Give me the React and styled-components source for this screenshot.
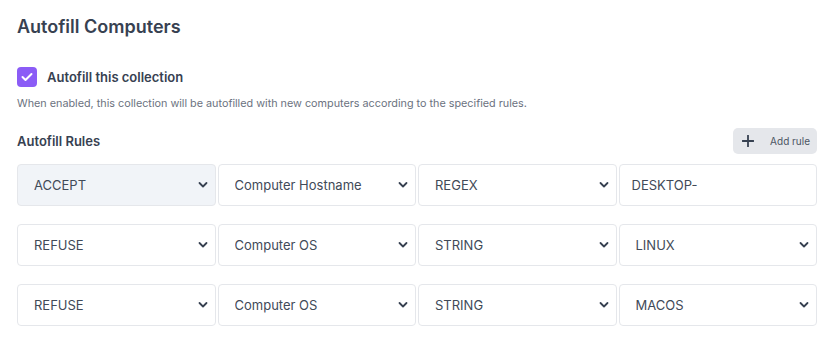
import React, { useState } from 'react'
import styled, { createGlobalStyle } from 'styled-components'

const GlobalStyle = createGlobalStyle`
  body {
    margin: 0;
    background: #ffffff;
    font-family: Inter, "Noto Sans", sans-serif;
    color: #374151;
  }
`

const Page = styled.div`
  width: 800px;
  padding: 15px 23px 0 17px;
  display: flex;
  flex-direction: column;
`

const Title = styled.h2`
  margin: 0;
  font-size: 18px;
  font-weight: 600;
  line-height: 24px;
  color: #374151;
`

const CheckRow = styled.label`
  display: flex;
  align-items: center;
  gap: 10px;
  margin-top: 28px;
  cursor: pointer;
`

const Box = styled.span`
  width: 20px;
  height: 20px;
  border-radius: 4px;
  background: ${p => (p.checked ? '#8b5cf6' : '#ffffff')};
  border: ${p => (p.checked ? 'none' : '1px solid #d1d5db')};
  display: flex;
  align-items: center;
  justify-content: center;
`

const CheckLabel = styled.span`
  font-size: 13px;
  font-weight: 600;
  color: #374151;
`

const Hint = styled.p`
  margin: 9px 0 0;
  font-size: 10.8px;
  line-height: 16px;
  color: #6b7280;
`

const RulesHeader = styled.div`
  display: flex;
  align-items: center;
  justify-content: space-between;
  margin-top: 16px;
`

const SubTitle = styled.span`
  font-size: 13px;
  font-weight: 600;
  color: #374151;
`

const AddButton = styled.button`
  display: flex;
  align-items: center;
  gap: 16px;
  height: 26px;
  padding: 0 7px 0 9px;
  border: none;
  border-radius: 5px;
  background: #e5e7eb;
  color: #4b5563;
  font-family: Inter, sans-serif;
  font-size: 10px;
  cursor: pointer;
`

const Rules = styled.div`
  display: flex;
  flex-direction: column;
  gap: 18px;
  margin-top: 10px;
`

const Row = styled.div`
  display: grid;
  grid-template-columns: repeat(4, 1fr);
  gap: 2px;
`

const SelectWrap = styled.div`
  position: relative;
  height: 42px;
`

const Select = styled.select`
  appearance: none;
  width: 100%;
  height: 100%;
  box-sizing: border-box;
  padding: 0 28px 0 ${p => (p.$pad || 16)}px;
  border: 1px solid #e5e7eb;
  border-radius: 4px;
  background: ${p => (p.$tint ? '#f1f4f8' : '#ffffff')};
  font-family: Inter, sans-serif;
  font-size: 13px;
  color: #414a58;
  outline: none;
`

const Chevron = styled.svg`
  position: absolute;
  right: 8px;
  top: 50%;
  margin-top: -4px;
  pointer-events: none;
`

const TextInput = styled.input`
  width: 100%;
  height: 42px;
  box-sizing: border-box;
  padding: 0 12px;
  border: 1px solid #e5e7eb;
  border-radius: 4px;
  font-family: Inter, sans-serif;
  font-size: 13px;
  color: #414a58;
  outline: none;
`

const rules = [
  { action: 'ACCEPT', field: 'Computer Hostname', kind: 'REGEX', value: 'DESKTOP-', tint: true },
  { action: 'REFUSE', field: 'Computer OS', kind: 'STRING', value: 'LINUX' },
  { action: 'REFUSE', field: 'Computer OS', kind: 'STRING', value: 'MACOS' }
]

const Dropdown = ({ value, tint, pad }) => (
  <SelectWrap>
    <Select defaultValue={value} $tint={tint} $pad={pad}>
      <option>{value}</option>
    </Select>
    <Chevron width="10" height="8" viewBox="0 0 10 8">
      <path d="M1.5 2 L5 5.5 L8.5 2" fill="none" stroke="#374151" strokeWidth="1.8" strokeLinecap="round" strokeLinejoin="round" />
    </Chevron>
  </SelectWrap>
)

export default function App() {
  const [checked, setChecked] = useState(true)

  return (
    <Page>
      <GlobalStyle />
      <Title>Autofill Computers</Title>
      <CheckRow onClick={() => setChecked(!checked)}>
        <Box checked={checked}>
          {checked && (
            <svg width="12" height="10" viewBox="0 0 12 10">
              <path d="M1.5 5 L4.5 8 L10.5 2" fill="none" stroke="#fff" strokeWidth="2" strokeLinecap="round" strokeLinejoin="round" />
            </svg>
          )}
        </Box>
        <CheckLabel>Autofill this collection</CheckLabel>
      </CheckRow>
      <Hint>When enabled, this collection will be autofilled with new computers according to the specified rules.</Hint>
      <RulesHeader>
        <SubTitle>Autofill Rules</SubTitle>
        <AddButton>
          <svg width="12" height="12" viewBox="0 0 12 12">
            <path d="M6 0.5 V11.5 M0.5 6 H11.5" stroke="#374151" strokeWidth="1.8" strokeLinecap="round" />
          </svg>
          Add rule
        </AddButton>
      </RulesHeader>
      <Rules>
        {rules.map((rule, i) => (
          <Row key={i}>
            <Dropdown value={rule.action} tint={rule.tint} />
            <Dropdown value={rule.field} />
            <Dropdown value={rule.kind} />
            {rule.kind === 'REGEX'
              ? <TextInput defaultValue={rule.value} />
              : <Dropdown value={rule.value} />}
          </Row>
        ))}
      </Rules>
    </Page>
  )
}
